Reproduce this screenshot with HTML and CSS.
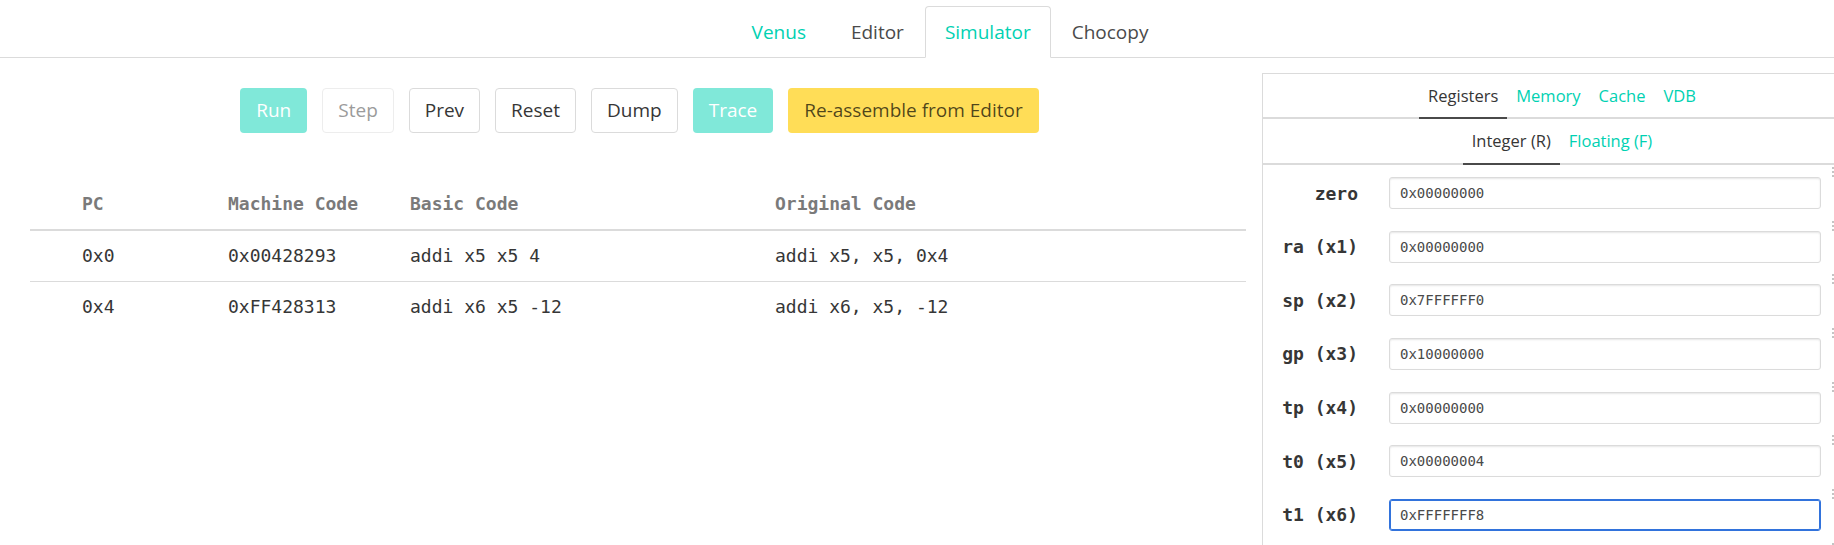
FILE: index.html
```html
<!DOCTYPE html>
<html lang="en">
<head>
<meta charset="utf-8">
<title>Venus Simulator</title>
<link rel="stylesheet" href="styles.css">
</head>
<body>
<nav class="topnav">
  <ul class="tabs">
    <li><a class="brand">Venus</a></li>
    <li><a>Editor</a></li>
    <li class="active"><a>Simulator</a></li>
    <li><a>Chocopy</a></li>
  </ul>
</nav>
<main class="main">
  <section class="sim">
    <div class="controls">
      <button class="btn primary-dis">Run</button>
      <button class="btn dis">Step</button>
      <button class="btn">Prev</button>
      <button class="btn">Reset</button>
      <button class="btn">Dump</button>
      <button class="btn primary-dis">Trace</button>
      <button class="btn warn">Re-assemble from Editor</button>
    </div>
    <table class="prog">
      <colgroup>
        <col class="c-pc"><col class="c-mc"><col class="c-bc"><col class="c-oc">
      </colgroup>
      <thead>
        <tr><th class="pc">PC</th><th>Machine Code</th><th>Basic Code</th><th>Original Code</th></tr>
      </thead>
      <tbody>
        <tr><td class="pc">0x0</td><td>0x00428293</td><td>addi x5 x5 4</td><td>addi x5, x5, 0x4</td></tr>
        <tr><td class="pc">0x4</td><td>0xFF428313</td><td>addi x6 x5 -12</td><td>addi x6, x5, -12</td></tr>
      </tbody>
    </table>
  </section>
  <aside class="panel">
    <ul class="ptabs">
      <li class="on"><a>Registers</a></li>
      <li><a>Memory</a></li>
      <li><a>Cache</a></li>
      <li><a>VDB</a></li>
    </ul>
    <ul class="ptabs">
      <li class="on"><a>Integer (R)</a></li>
      <li><a>Floating (F)</a></li>
    </ul>
    <div class="regs">
      <div class="reg"><span class="rname">zero</span><input class="rval" readonly value="0x00000000"><span class="grip"></span></div>
      <div class="reg"><span class="rname">ra (x1)</span><input class="rval" readonly value="0x00000000"><span class="grip"></span></div>
      <div class="reg"><span class="rname">sp (x2)</span><input class="rval" readonly value="0x7FFFFFF0"><span class="grip"></span></div>
      <div class="reg"><span class="rname">gp (x3)</span><input class="rval" readonly value="0x10000000"><span class="grip"></span></div>
      <div class="reg"><span class="rname">tp (x4)</span><input class="rval" readonly value="0x00000000"><span class="grip"></span></div>
      <div class="reg"><span class="rname">t0 (x5)</span><input class="rval" readonly value="0x00000004"><span class="grip"></span></div>
      <div class="reg"><span class="rname">t1 (x6)</span><input class="rval focus" readonly value="0xFFFFFFF8"><span class="grip"></span></div>
      <div class="reg tail"><span class="grip"></span></div>
    </div>
  </aside>
</main>
</body>
</html>
```

FILE: styles.css
```css
html, body {
  margin: 0;
  padding: 0;
  overflow: hidden;
  background: #fff;
}
body {
  width: 1834px;
  height: 545px;
  font-family: "Open Sans", "Noto Sans", sans-serif;
  color: #4a4a4a;
}
ul { list-style: none; margin: 0; padding: 0; }

/* top navigation */
.tabs {
  display: flex;
  justify-content: center;
  padding: 6px 0 0 63px;
  border-bottom: 1px solid #dbdbdb;
}
.tabs a {
  display: block;
  padding: 0 20px;
  line-height: 50px;
  font-size: 19px;
  border: 1px solid transparent;
  border-radius: 4px 4px 0 0;
  margin-bottom: -1px;
  color: #4a4a4a;
}
.tabs .brand { color: #00d1b2; padding: 0 23px; }
.tabs .active a {
  border-color: #dbdbdb;
  border-bottom-color: #fff;
  background: #fff;
  color: #00d1b2;
  padding: 0 19px;
}

.main {
  display: flex;
  align-items: flex-start;
}
.sim {
  margin-left: 30px;
  width: 1216px;
  flex: none;
}
.controls {
  display: flex;
  justify-content: center;
  gap: 15px;
  margin-top: 30px;
  padding-left: 3px;
}
.btn {
  height: 45px;
  padding: 0 15px;
  border: 1px solid #dbdbdb;
  border-radius: 4px;
  background: #fff;
  color: #363636;
  font-family: "Open Sans", "Noto Sans", sans-serif;
  font-size: 19px;
  line-height: 43px;
}
.btn.primary-dis { background: #80e8d9; border-color: transparent; color: #fff; }
.btn.dis { border-color: #ededed; color: #9b9b9b; }
.btn.warn { background: #ffdd57; border-color: transparent; color: rgba(0,0,0,.7); }

.prog {
  margin-top: 46px;
  width: 1216px;
  border-collapse: collapse;
  table-layout: fixed;
  font-family: "DejaVu Sans Mono", "Liberation Mono", monospace;
  font-size: 18px;
}
.c-pc { width: 183px; }
.c-mc { width: 182px; }
.c-bc { width: 365px; }
.prog th, .prog td {
  padding: 10px 15px;
  line-height: 30px;
  text-align: left;
  white-space: nowrap;
}
.prog th {
  color: #7a7a7a;
  font-weight: bold;
  border-bottom: 2px solid #dbdbdb;
}
.prog td {
  color: #363636;
  border-bottom: 1px solid #dbdbdb;
}
.prog tbody tr:last-child td { border-bottom: none; }
.prog .pc { padding-left: 52px; }

/* right panel */
.panel {
  flex: none;
  width: 600px;
  margin: 15px 0 0 16px;
  border: 1px solid #dbdbdb;
  box-sizing: border-box;
  height: 600px;
}
.ptabs {
  display: flex;
  justify-content: center;
  border-bottom: 2px solid #dbdbdb;
  font-size: 16.5px;
}
.ptabs a {
  display: block;
  padding: 0 9px;
  line-height: 43px;
  border-bottom: 2px solid #dbdbdb;
  margin-bottom: -2px;
  color: #00d1b2;
}
.ptabs + .ptabs a { line-height: 44px; }
.ptabs .on a { color: #363636; border-bottom-color: #4a4a4a; }

.regs { padding-top: 12px; }
.reg {
  display: flex;
  align-items: center;
  height: 32px;
  margin-bottom: 21.67px;
}
.rname {
  width: 95px;
  flex: none;
  text-align: right;
  font-family: "DejaVu Sans Mono", "Liberation Mono", monospace;
  font-weight: bold;
  font-size: 18px;
  color: #363636;
  margin-right: 31px;
}
.rval {
  box-sizing: border-box;
  width: 432px;
  height: 32px;
  flex: none;
  margin: 0;
  padding: 0 10px;
  border: 1px solid #dbdbdb;
  border-radius: 3px;
  box-shadow: inset 0 1px 2px rgba(10,10,10,.1);
  font-family: "DejaVu Sans Mono", "Liberation Mono", monospace;
  font-size: 14px;
  color: #4a4a4a;
  background: #fff;
  outline: none;
}
.rval.focus {
  border-color: #3273dc;
  box-shadow: inset 0 0 0 1px #3273dc;
}
.grip {
  flex: none;
  width: 2px;
  height: 11px;
  margin-left: 11px;
  align-self: flex-start;
  margin-top: -10px;
  background: repeating-linear-gradient(to bottom, #c4c4c4 0 2px, transparent 2px 4px);
}
.reg.tail .grip { margin-left: 569px; }
```
